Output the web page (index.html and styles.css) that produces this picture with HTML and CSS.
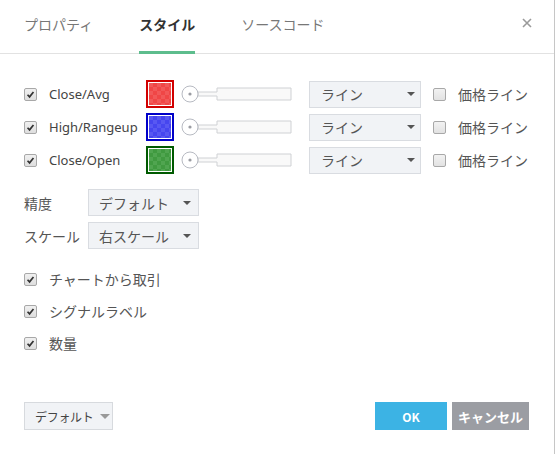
FILE: index.html
```html
<!DOCTYPE html>
<html lang="ja">
<head>
<meta charset="utf-8">
<link rel="stylesheet" href="styles.css">
</head>
<body>
<div class="dialog">
  <div class="header">
    <div class="tabs">
      <span class="tab">プロパティ</span>
      <span class="tab active">スタイル</span>
      <span class="tab">ソースコード</span>
    </div>
    <svg class="close" width="10" height="10" viewBox="0 0 10 10"><path d="M1 1L9 9M9 1L1 9" stroke="#9a9a9a" stroke-width="1.6"/></svg>
  </div>

  <div class="content">
    <div class="plots">
      <div class="plot-row">
        <span class="cb checked"><svg viewBox="0 0 13 13"><path d="M3 6.8L5.4 9.3L10 3.6" fill="none" stroke="#333" stroke-width="2"/></svg></span>
        <span class="plot-label">Close/Avg</span>
        <span class="swatch red"><span class="fill"></span></span>
        <svg class="slider" width="112" height="20" viewBox="0 0 112 20"><path d="M17 8H36V4H110V16H36V12H17Z" fill="#f9f9f9" stroke="#cfd1d4"/><circle cx="9" cy="10" r="8" fill="#fff" stroke="#b7bac2"/><circle cx="9" cy="10" r="1.6" fill="#9a9ca2"/></svg>
        <span class="select wide"><span>ライン</span><i class="caret"></i></span>
        <span class="cb"></span>
        <span class="price">価格ライン</span>
      </div>
      <div class="plot-row">
        <span class="cb checked"><svg viewBox="0 0 13 13"><path d="M3 6.8L5.4 9.3L10 3.6" fill="none" stroke="#333" stroke-width="2"/></svg></span>
        <span class="plot-label">High/Rangeup</span>
        <span class="swatch blue"><span class="fill"></span></span>
        <svg class="slider" width="112" height="20" viewBox="0 0 112 20"><path d="M17 8H36V4H110V16H36V12H17Z" fill="#f9f9f9" stroke="#cfd1d4"/><circle cx="9" cy="10" r="8" fill="#fff" stroke="#b7bac2"/><circle cx="9" cy="10" r="1.6" fill="#9a9ca2"/></svg>
        <span class="select wide"><span>ライン</span><i class="caret"></i></span>
        <span class="cb"></span>
        <span class="price">価格ライン</span>
      </div>
      <div class="plot-row">
        <span class="cb checked"><svg viewBox="0 0 13 13"><path d="M3 6.8L5.4 9.3L10 3.6" fill="none" stroke="#333" stroke-width="2"/></svg></span>
        <span class="plot-label">Close/Open</span>
        <span class="swatch green"><span class="fill"></span></span>
        <svg class="slider" width="112" height="20" viewBox="0 0 112 20"><path d="M17 8H36V4H110V16H36V12H17Z" fill="#f9f9f9" stroke="#cfd1d4"/><circle cx="9" cy="10" r="8" fill="#fff" stroke="#b7bac2"/><circle cx="9" cy="10" r="1.6" fill="#9a9ca2"/></svg>
        <span class="select wide"><span>ライン</span><i class="caret"></i></span>
        <span class="cb"></span>
        <span class="price">価格ライン</span>
      </div>
    </div>

    <div class="fields">
      <div class="field-row">
        <span class="field-label">精度</span>
        <span class="select narrow"><span>デフォルト</span><i class="caret"></i></span>
      </div>
      <div class="field-row">
        <span class="field-label">スケール</span>
        <span class="select narrow"><span>右スケール</span><i class="caret"></i></span>
      </div>
    </div>

    <div class="checks">
      <div class="check-row">
        <span class="cb checked"><svg viewBox="0 0 13 13"><path d="M3 6.8L5.4 9.3L10 3.6" fill="none" stroke="#333" stroke-width="2"/></svg></span>
        <span class="check-label">チャートから取引</span>
      </div>
      <div class="check-row">
        <span class="cb checked"><svg viewBox="0 0 13 13"><path d="M3 6.8L5.4 9.3L10 3.6" fill="none" stroke="#333" stroke-width="2"/></svg></span>
        <span class="check-label">シグナルラベル</span>
      </div>
      <div class="check-row">
        <span class="cb checked"><svg viewBox="0 0 13 13"><path d="M3 6.8L5.4 9.3L10 3.6" fill="none" stroke="#333" stroke-width="2"/></svg></span>
        <span class="check-label">数量</span>
      </div>
    </div>
  </div>

  <div class="footer">
    <span class="btn-default"><span class="bd-text">デフォルト</span><i class="caret-lg"></i></span>
    <div class="actions">
      <span class="btn ok">OK</span>
      <span class="btn cancel">キャンセル</span>
    </div>
  </div>
</div>
</body>
</html>
```

FILE: styles.css
```css
* { box-sizing: border-box; }
html, body { margin: 0; padding: 0; background: #fff; }
body {
  width: 556px;
  height: 454px;
  overflow: hidden;
  font-family: "Noto Sans", "Noto Sans CJK JP", sans-serif;
  color: #444;
}
.dialog {
  width: 555px;
  height: 454px;
  border-right: 1px solid #c6c6c6;
  display: flex;
  flex-direction: column;
}
.header {
  height: 54px;
  border-bottom: 1px solid #e2e2e2;
  display: flex;
  align-items: stretch;
  justify-content: space-between;
  padding: 0 22px 0 24px;
}
.tabs { display: flex; gap: 46px; }
.tab {
  font-family: "Noto Sans CJK JP", sans-serif;
  font-size: 14px;
  color: #777;
  padding-top: 14px;
  border-bottom: 3px solid transparent;
  margin-bottom: -1px;
}
.tab.active {
  color: #333;
  font-weight: bold;
  border-bottom-color: #5dbd8d;
}
.close { margin-top: 18px; }

.content { padding: 26px 0 0 24px; }

.plots { display: flex; flex-direction: column; gap: 5px; }
.plot-row { display: flex; align-items: center; height: 28px; }

.cb {
  width: 13px;
  height: 13px;
  border: 1px solid #a8a8a8;
  border-radius: 2px;
  background: linear-gradient(#f0f0f0, #dedede);
  flex: none;
  display: flex;
}
.cb svg { width: 11px; height: 11px; }

.plot-label {
  font-size: 13px;
  color: #444;
  margin-left: 12px;
  width: 97px;
}
.swatch {
  width: 28px;
  height: 28px;
  border: 2px solid;
  padding: 1px;
  background: #fff;
  flex: none;
  display: flex;
}
.swatch .fill { flex: 1; background-size: 8px 8px; }
.swatch.red { border-color: #d10000; }
.swatch.red .fill { background-image: repeating-conic-gradient(#f04646 0 25%, #f25858 0 50%); }
.swatch.blue { border-color: #0000c8; }
.swatch.blue .fill { background-image: repeating-conic-gradient(#4646ef 0 25%, #5858f2 0 50%); }
.swatch.green { border-color: #005a00; }
.swatch.green .fill { background-image: repeating-conic-gradient(#409a40 0 25%, #50a550 0 50%); }

.slider { margin-left: 7px; flex: none; }

.select {
  display: flex;
  align-items: center;
  justify-content: space-between;
  height: 27px;
  background: #f1f3f6;
  border: 1px solid #d9dce1;
  font-family: "Noto Sans CJK JP", sans-serif;
  font-size: 14px;
  color: #555;
  flex: none;
  white-space: nowrap;
}
.select.wide { width: 112px; margin-left: 16px; padding: 0 4px 0 11px; }
.select.narrow { width: 111px; padding: 0 6px 0 10px; }
.caret {
  width: 0; height: 0;
  border-left: 4px solid transparent;
  border-right: 4px solid transparent;
  border-top: 4px solid #555;
  margin-right: 1px;
}
.plot-row .select + .cb { margin-left: 12px; background: linear-gradient(#f2f2f2, #e2e2e2); }
.price {
  margin-left: 12px;
  font-family: "Noto Sans CJK JP", sans-serif;
  font-size: 14px;
  color: #555;
  white-space: nowrap;
}

.fields { display: flex; flex-direction: column; gap: 6px; margin-top: 15px; }
.field-row { display: flex; align-items: center; height: 27px; }
.field-label {
  width: 64px;
  font-family: "Noto Sans CJK JP", sans-serif;
  font-size: 14px;
  color: #555;
}

.checks { display: flex; flex-direction: column; gap: 12px; margin-top: 20px; }
.check-row { display: flex; align-items: center; height: 20px; }
.check-label {
  margin-left: 12px;
  font-family: "Noto Sans CJK JP", sans-serif;
  font-size: 14px;
  color: #555;
}

.footer {
  margin-top: auto;
  display: flex;
  justify-content: space-between;
  align-items: center;
  padding: 0 25px 24px 24px;
}
.btn-default {
  display: flex;
  align-items: center;
  gap: 6px;
  width: 89px;
  height: 28px;
  padding: 0 0 0 10px;
  background: #f1f3f6;
  border: 1px solid #d7dade;
  font-family: "Noto Sans CJK JP", sans-serif;
  font-size: 12px;
  color: #444;
  white-space: nowrap;
}
.bd-text { letter-spacing: -0.3px; }
.caret-lg {
  width: 0; height: 0;
  border-left: 5px solid transparent;
  border-right: 5px solid transparent;
  border-top: 5px solid #999;
}
.actions { display: flex; gap: 5px; }
.btn {
  height: 28px;
  display: flex;
  align-items: center;
  justify-content: center;
  color: #fff;
  font-family: "Noto Sans CJK JP", sans-serif;
  font-weight: bold;
  font-size: 13px;
  white-space: nowrap;
}
.btn.ok { width: 72px; background: #3cb3e4; font-size: 12px; }
.btn.cancel { width: 77px; background: #9b9da3; }
```
